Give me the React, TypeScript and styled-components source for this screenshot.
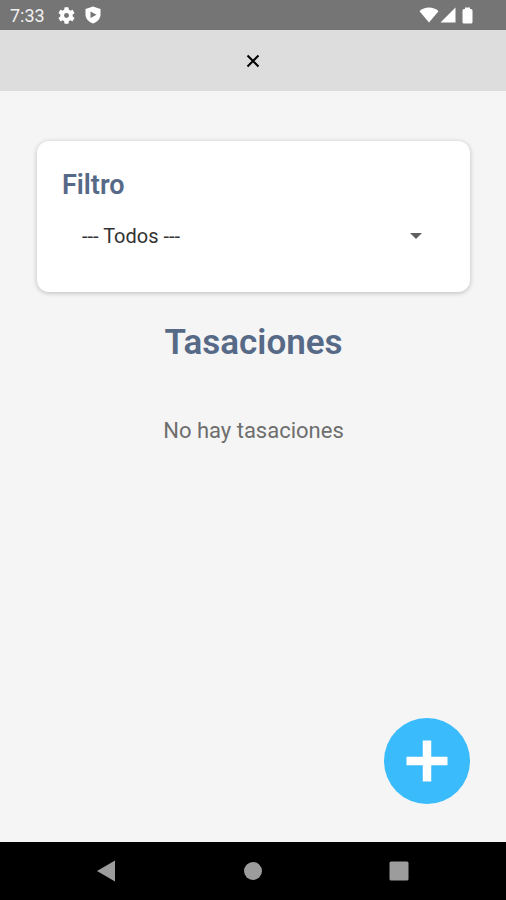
import React, { useState } from "react";
import styled, { createGlobalStyle } from "styled-components";

const GlobalStyle = createGlobalStyle`
  *, *::before, *::after { box-sizing: border-box; }
  body {
    margin: 0;
    background: #f5f5f5;
    font-family: Roboto, "Noto Sans", sans-serif;
  }
  button, select { font-family: inherit; }
`;

const Screen = styled.div`
  display: flex;
  flex-direction: column;
  min-height: 100vh;
`;

const StatusBar = styled.div`
  display: flex;
  align-items: center;
  justify-content: space-between;
  height: 30px;
  padding: 0 33px 0 10px;
  background: #757575;
  color: #ffffff;
`;

const StatusGroup = styled.div<{ $gap: number }>`
  display: flex;
  align-items: center;
  gap: ${({ $gap }) => $gap}px;
`;

const Clock = styled.time`
  margin-right: 3px;
  padding-top: 2px;
  font-size: 18px;
  line-height: 28px;
  color: #f0f0f0;
`;

const BatterySlot = styled.span`
  display: flex;
  margin-left: 5px;
`;

const Header = styled.header`
  display: flex;
  align-items: center;
  justify-content: center;
  height: 61px;
  background: #dddddd;
`;

const CloseButton = styled.button`
  display: flex;
  align-items: center;
  justify-content: center;
  width: 44px;
  height: 44px;
  padding: 0;
  border: 0;
  background: transparent;
  cursor: pointer;
`;

const Main = styled.main`
  display: flex;
  flex: 1;
  flex-direction: column;
  padding: 50px 36px 38px 37px;
`;

const FilterCard = styled.section`
  display: flex;
  flex-direction: column;
  gap: 11px;
  padding: 28px 25px 32px;
  border-radius: 12px;
  background: #ffffff;
  box-shadow: 0 1px 5px rgba(0, 0, 0, 0.24);
`;

const FilterLabel = styled.label`
  font-size: 27px;
  font-weight: 600;
  line-height: 32px;
  color: #566a87;
`;

const SelectField = styled.div`
  display: grid;
  align-items: center;
`;

const Select = styled.select`
  grid-area: 1 / 1;
  appearance: none;
  width: 100%;
  height: 48px;
  padding: 0 48px 0 20px;
  border: 0;
  background: transparent;
  font-size: 20px;
  color: #333333;
`;

const SelectArrow = styled.svg`
  grid-area: 1 / 1;
  justify-self: end;
  margin-right: 23px;
  pointer-events: none;
`;

const Title = styled.h1`
  margin: 29px 0 0;
  font-size: 35px;
  font-weight: 600;
  line-height: 44px;
  text-align: center;
  color: #566a87;
`;

const EmptyMessage = styled.p`
  margin: 50px 0 32px;
  font-size: 22px;
  line-height: 32px;
  text-align: center;
  color: #6e6e6e;
`;

const AddButton = styled.button`
  display: flex;
  align-items: center;
  justify-content: center;
  align-self: flex-end;
  width: 86px;
  height: 86px;
  margin-top: auto;
  padding: 0;
  border: 0;
  border-radius: 50%;
  background: #3abbfb;
  cursor: pointer;
`;

const NavBar = styled.nav`
  display: grid;
  grid-template-columns: repeat(3, 1fr);
  height: 58px;
  padding: 0 34px;
  background: #000000;
`;

const NavButton = styled.button`
  display: flex;
  align-items: center;
  justify-content: center;
  padding: 0;
  border: 0;
  background: transparent;
  color: #9c9c9c;
  cursor: pointer;
`;

const GearIcon = () => (
  <svg width="17" height="17" viewBox="2 2 20 20" fill="currentColor" aria-hidden="true">
    <path d="M19.14 12.94c.04-.3.06-.61.06-.94s-.02-.64-.07-.94l2.03-1.58a.49.49 0 0 0 .12-.61l-1.92-3.32a.49.49 0 0 0-.59-.22l-2.39.96a7 7 0 0 0-1.62-.94l-.36-2.54a.48.48 0 0 0-.48-.41h-3.84a.47.47 0 0 0-.47.41l-.36 2.54c-.59.24-1.13.57-1.62.94l-2.39-.96a.48.48 0 0 0-.59.22L2.74 8.87a.47.47 0 0 0 .12.61l2.03 1.58c-.05.3-.09.63-.09.94s.02.64.07.94l-2.03 1.58a.49.49 0 0 0-.12.61l1.92 3.32c.12.22.37.29.59.22l2.39-.96c.5.38 1.03.7 1.62.94l.36 2.54c.05.24.24.41.48.41h3.84c.24 0 .44-.17.47-.41l.36-2.54a7 7 0 0 0 1.62-.94l2.39.96c.22.08.47 0 .59-.22l1.92-3.32a.47.47 0 0 0-.12-.61zM12 14.9a2.9 2.9 0 1 1 0-5.8 2.9 2.9 0 0 1 0 5.8z" />
  </svg>
);

const ShieldIcon = () => (
  <svg width="16" height="18" viewBox="0 0 16 18" aria-hidden="true">
    <path d="M8 .5 15.5 3v5.5c0 4-3 7.4-7.5 9-4.5-1.6-7.5-5-7.5-9V3z" fill="#ffffff" />
    <path d="M5.5 5.5V12l6-3.300z" fill="#757575" />
  </svg>
);

const WifiIcon = () => (
  <svg width="20" height="16" viewBox="0 0 20 16" fill="currentColor" aria-hidden="true">
    <path d="M10 15.5.5 4.200C3 1.800 6.300.5 10 .5s7 1.300 9.500 3.700z" />
  </svg>
);

const SignalIcon = () => (
  <svg width="16" height="16" viewBox="0 0 16 16" fill="currentColor" aria-hidden="true">
    <path d="M15.5.5v15H.5z" />
  </svg>
);

const BatteryIcon = () => (
  <svg width="11" height="17" viewBox="0 0 11 17" fill="currentColor" aria-hidden="true">
    <path d="M3 .5h5V2h1q1.500 0 1.500 1.500v11.500q0 1.500-1.500 1.500H2q-1.500 0-1.500-1.500V3.500Q.5 2 2 2h1z" />
  </svg>
);

export default function App() {
  const [filter, setFilter] = useState("todos");

  return (
    <Screen>
      <GlobalStyle />
      <StatusBar>
        <StatusGroup $gap={10}>
          <Clock>7:33</Clock>
          <GearIcon />
          <ShieldIcon />
        </StatusGroup>
        <StatusGroup $gap={1}>
          <WifiIcon />
          <SignalIcon />
          <BatterySlot>
            <BatteryIcon />
          </BatterySlot>
        </StatusGroup>
      </StatusBar>
      <Header>
        <CloseButton type="button" aria-label="Cerrar">
          <svg width="14" height="14" viewBox="0 0 14 14" aria-hidden="true">
            <path d="M1.500 1.500l11 11M12.500 1.500l-11 11" stroke="#000000" strokeWidth="2" />
          </svg>
        </CloseButton>
      </Header>
      <Main>
        <FilterCard>
          <FilterLabel htmlFor="filtro">Filtro</FilterLabel>
          <SelectField>
            <Select id="filtro" value={filter} onChange={(e) => setFilter(e.target.value)}>
              <option value="todos">--- Todos ---</option>
            </Select>
            <SelectArrow width="12" height="6" viewBox="0 0 12 6" aria-hidden="true">
              <path d="M0 0h12L6 6z" fill="#616161" />
            </SelectArrow>
          </SelectField>
        </FilterCard>
        <Title>Tasaciones</Title>
        <EmptyMessage>No hay tasaciones</EmptyMessage>
        <AddButton type="button" aria-label="Agregar">
          <svg width="42" height="42" viewBox="0 0 42 42" aria-hidden="true">
            <path d="M21 .5v41M.5 21h41" stroke="#ffffff" strokeWidth="8.5" />
          </svg>
        </AddButton>
      </Main>
      <NavBar>
        <NavButton type="button" aria-label="Atrás">
          <svg width="20" height="22" viewBox="0 0 20 22" fill="currentColor" aria-hidden="true">
            <path d="M18 .5v21L0 11z" />
          </svg>
        </NavButton>
        <NavButton type="button" aria-label="Inicio">
          <svg width="20" height="20" viewBox="0 0 20 20" fill="currentColor" aria-hidden="true">
            <circle cx="10" cy="10" r="9" />
          </svg>
        </NavButton>
        <NavButton type="button" aria-label="Recientes">
          <svg width="20" height="20" viewBox="0 0 20 20" fill="currentColor" aria-hidden="true">
            <rect x="0.5" y="0.5" width="19" height="19" rx="1.5" />
          </svg>
        </NavButton>
      </NavBar>
    </Screen>
  );
}
